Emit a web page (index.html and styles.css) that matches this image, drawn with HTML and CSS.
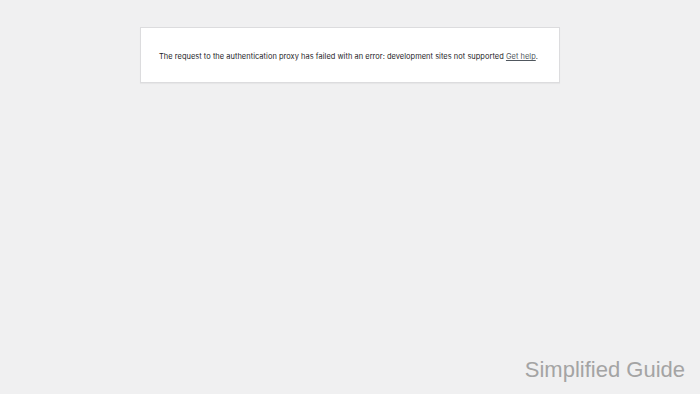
FILE: index.html
```html
<!DOCTYPE html>
<html lang="en">
<head>
    <meta charset="UTF-8">
    <meta name="viewport" content="width=device-width, initial-scale=1.0">
    <title>Error</title>
    <link rel="stylesheet" href="styles.css">
</head>
<body>

<div class="notice">
    <p class="message">The request to the authentication proxy has failed with an error: development sites not supported <a href="#">Get help</a>.</p>
</div>

<div class="watermark">Simplified Guide</div>

</body>
</html>
```

FILE: styles.css
```css
html, body {
    height: 100%;
}

body {
    margin: 0;
    background-color: #f0f0f1;
    font-family: Inter, "Noto Sans", sans-serif;
    color: #1d2327;
    display: flex;
    flex-direction: column;
    align-items: center;
}

.notice {
    margin-top: 27px;
    width: 382px;
    height: 49px;
    padding: 5px 18px 0;
    background-color: #fff;
    border: 1px solid #dcdcde;
    box-shadow: 0 1px 1px rgba(0, 0, 0, 0.04);
    display: flex;
    align-items: center;
}

.message {
    margin: 0;
    font-size: 7.45px;
    letter-spacing: 0.04px;
    line-height: 1.4;
    white-space: nowrap;
}

.message a {
    color: #50575e;
}

.watermark {
    margin-top: auto;
    align-self: flex-end;
    margin-right: 15px;
    margin-bottom: 11px;
    font-family: "Liberation Sans", Arial, sans-serif;
    font-size: 22px;
    color: #a4a4a4;
}
```
